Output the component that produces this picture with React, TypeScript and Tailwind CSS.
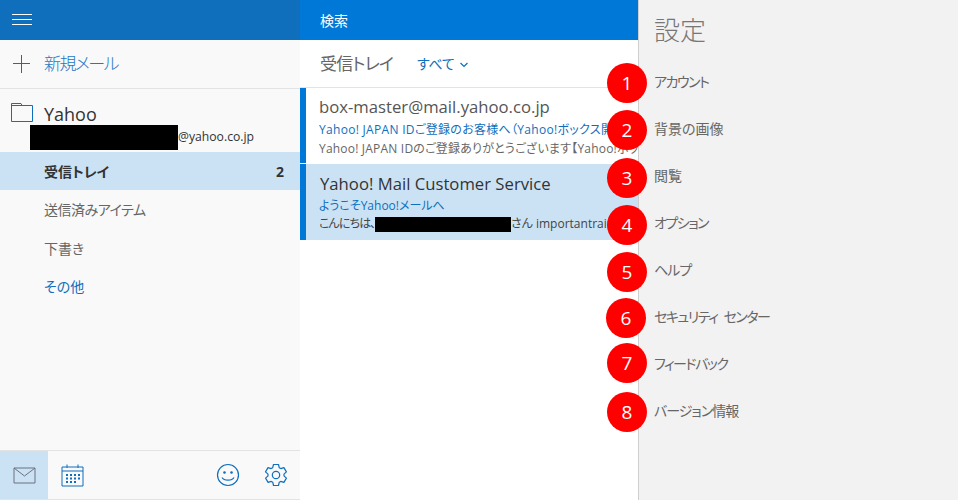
import React from 'react';

const font = "font-['Open_Sans','Noto_Sans_CJK_JP',sans-serif] [font-feature-settings:'palt']";

const settings = [
  { label: 'アカウント', cls: 'tracking-[-1.5px]' },
  { label: '背景の画像', cls: '' },
  { label: '閲覧', cls: '' },
  { label: 'オプション', cls: 'tracking-[-1.5px]' },
  { label: 'ヘルプ', cls: 'tracking-[-1px]' },
  { label: 'セキュリティ センター', cls: 'tracking-[-1.5px] [word-spacing:4px]' },
  { label: 'フィードバック', cls: 'tracking-[-1.5px]' },
  { label: 'バージョン情報', cls: 'tracking-[-1px]' },
];

const badges = [
  { n: 1, x: 'left-[607px] top-[63px]' },
  { n: 2, x: 'left-[607px] top-[110px]' },
  { n: 3, x: 'left-[607px] top-[158px]' },
  { n: 4, x: 'left-[607px] top-[205px]' },
  { n: 5, x: 'left-[607px] top-[252px]' },
  { n: 6, x: 'left-[606px] top-[298px]' },
  { n: 7, x: 'left-[607px] top-[343px]' },
  { n: 8, x: 'left-[607px] top-[392px]' },
];

const Sidebar: React.FC = () => (
  <div className="w-[300px] h-[500px] shrink-0 flex flex-col bg-[#f9f9f9]">
    <div className="h-10 bg-[#0f6fbd] flex items-center pl-3 shrink-0">
      <div className="w-5 -mt-px flex flex-col gap-[4px]">
        <div className="h-px bg-white" />
        <div className="h-px bg-white" />
        <div className="h-px bg-white" />
      </div>
    </div>
    <div className="h-[49px] border-b border-[#e3e3e3] flex items-center shrink-0">
      <svg width="18" height="18" viewBox="0 0 18 18" className="ml-[13px] text-[#0f6fbd]">
        <path d="M8.500 0V18M0 8.500H17" stroke="currentColor" strokeWidth="1" fill="none" />
      </svg>
      <span className="ml-[13px] text-[17px] text-[#1f78c4] font-light tracking-[-1.500px]">新規メール</span>
    </div>
    <div className="h-[63px] relative shrink-0">
      <svg width="23" height="19" viewBox="0 0 23 19" className="absolute left-[11px] top-[14px] text-[#0f6fbd]">
        <path d="M0.500 18.500V0.500H10L11 2.500H21.500V18.500Z" stroke="currentColor" fill="none" />
        <path d="M0.500 2.500H11" stroke="currentColor" fill="none" />
      </svg>
      <div className="pl-11 pt-[13px] text-[18px] leading-6 text-[#333]">Yahoo</div>
      <div className="flex items-center ml-[30px] h-[25px] -mt-[1px]">
        <div className="w-[148px] h-[25px] bg-black" />
        <span className="text-[12.200px] text-[#333]">@yahoo.co.jp</span>
      </div>
    </div>
    <div className="h-[38px] bg-[#cbe2f5] flex items-center justify-between pl-11 pr-4 text-[14px] font-bold text-[#333] shrink-0">
      <span>受信トレイ</span>
      <span>2</span>
    </div>
    <div className="h-[39px] flex items-center pl-11 text-[14px] text-[#666] shrink-0 tracking-[-0.5px]">送信済みアイテム</div>
    <div className="h-[38px] flex items-center pl-11 text-[14px] text-[#666] shrink-0">下書き</div>
    <div className="h-[39px] flex items-center pl-11 text-[14px] text-[#0f6fbd] shrink-0">その他</div>
    <div className="flex-1" />
    <div className="h-[50px] border-y border-[#e3e3e3] flex items-stretch shrink-0">
      <div className="w-12 bg-[#cbe2f5] flex items-center justify-center">
        <svg width="23" height="17" viewBox="0 0 23 17" className="text-[#6b7280]">
          <path d="M1 1H22V16H1ZM1 1L11.500 9L22 1" stroke="currentColor" fill="none" />
        </svg>
      </div>
      <div className="w-12 flex items-center justify-center">
        <svg width="23" height="23" viewBox="0 0 23 23" className="text-[#0f6fbd]">
          <path d="M1 3H22V22H1ZM1 7H22M6 0.500V4M17 0.500V4" stroke="currentColor" fill="none" />
          <path d="M5 10h2v2H5zM9 10h2v2H9zM13 10h2v2h-2zM17 10h2v2h-2zM5 13.500h2v2H5zM9 13.500h2v2H9zM13 13.500h2v2h-2zM17 13.500h2v2h-2zM5 17h2v2H5zM9 17h2v2H9zM13 17h2v2h-2z" fill="currentColor" />
        </svg>
      </div>
      <div className="flex-1" />
      <div className="w-12 flex items-center justify-center">
        <svg width="24" height="24" viewBox="0 0 24 24" className="text-[#0f6fbd]">
          <circle cx="12" cy="12" r="10.500" stroke="currentColor" strokeWidth="1.200" fill="none" />
          <circle cx="8.500" cy="9.500" r="1.300" fill="currentColor" />
          <circle cx="15.500" cy="9.500" r="1.300" fill="currentColor" />
          <path d="M6 14.500C8 18 16 18 18 14.500" stroke="currentColor" strokeWidth="1.200" fill="none" />
        </svg>
      </div>
      <div className="w-[48px] flex items-center justify-center">
        <svg width="24" height="24" viewBox="0 0 24 24" className="text-[#0f6fbd]">
          <path d="M9.500 1.500h5l.7 3.200 1.600.9 3.100-1 2.500 4.300-2.400 2.200v1.800l2.400 2.200-2.500 4.300-3.100-1-1.600.9-.7 3.200h-5l-.7-3.200-1.600-.9-3.100 1-2.500-4.300 2.400-2.200v-1.800L1.500 8.900 4 4.600l3.100 1 1.600-.9z" stroke="currentColor" strokeWidth="1.200" strokeLinejoin="round" fill="none" />
          <circle cx="12" cy="12" r="3.700" stroke="currentColor" strokeWidth="1.200" fill="none" />
        </svg>
      </div>
    </div>
  </div>
);

const MailList: React.FC = () => (
  <div className="w-[338px] h-[500px] shrink-0 flex flex-col bg-white overflow-hidden">
    <div className="h-10 bg-[#0078d7] flex items-center pl-5 text-[14px] text-white shrink-0">検索</div>
    <div className="h-[48px] border-b border-[#e3e3e3] flex items-center shrink-0">
      <span className="ml-5 text-[17px] text-[#666] tracking-[-0.8px]">受信トレイ</span>
      <span className="ml-[24px] text-[14px] text-[#0f6fbd] tracking-[-0.3px]">すべて</span>
      <svg width="8" height="6" viewBox="0 0 8 6" className="ml-[6px] mt-[2px] text-[#0f6fbd]">
        <path d="M0.500 1L4 4.500L7.500 1" stroke="currentColor" strokeWidth="1.200" fill="none" />
      </svg>
    </div>
    <div className="h-[75px] border-l-[6px] border-[#0078d7] pl-[13px] flex flex-col whitespace-nowrap shrink-0">
      <div className="mt-[6px] h-[26px] text-[16.700px] leading-[26px] text-[#555]">box-master@mail.yahoo.co.jp</div>
      <div className="h-[20px] text-[12px] leading-[20px] text-[#0f6fbd] tracking-[0.3px]">Yahoo! JAPAN IDご登録のお客様へ（Yahoo!ボックス開設</div>
      <div className="h-[20px] text-[12px] leading-[18px] text-[#666] tracking-[0.2px]">Yahoo! JAPAN IDのご登録ありがとうございます【Yahoo!ボックス】</div>
    </div>
    <div className="h-[76px] mt-px border-l-[6px] border-[#0078d7] bg-[#cbe2f5] pl-[13px] flex flex-col whitespace-nowrap shrink-0">
      <div className="mt-[7px] ml-px h-[26px] text-[16.700px] leading-[26px] text-[#333]">Yahoo! Mail Customer Service</div>
      <div className="h-[18px] text-[12px] leading-[18px] text-[#0f6fbd]">ようこそYahoo!メールへ</div>
      <div className="h-[18px] text-[12px] leading-[18px] text-[#444] flex items-center">
        <span className="tracking-[-0.9px]">こんにちは、</span>
        <span className="inline-block w-[137px] h-[15px] bg-black" />
        <span>さん importantrainbow</span>
      </div>
    </div>
  </div>
);

const SettingsPanel: React.FC = () => (
  <div className="flex-1 h-[500px] bg-[#f2f2f2] border-l border-[#cfcfcf] pl-[15px]">
    <div className="h-[58px] pt-[11px] text-[26px] leading-[38px] text-[#777] font-light">設定</div>
    {settings.map((s) => (
      <div key={s.label} className={`h-[47px] flex items-center text-[14px] text-[#666] ${s.cls}`}>
        {s.label}
      </div>
    ))}
  </div>
);

export default function App() {
  return (
    <div className={`relative w-[958px] h-[500px] flex overflow-hidden ${font}`}>
      <Sidebar />
      <MailList />
      <SettingsPanel />
      {badges.map((b) => (
        <div
          key={b.n}
          className={`absolute ${b.x} w-10 h-10 rounded-full bg-[#ff0000] text-white text-[19px] flex items-center justify-center`}
        >
          {b.n}
        </div>
      ))}
    </div>
  );
}
